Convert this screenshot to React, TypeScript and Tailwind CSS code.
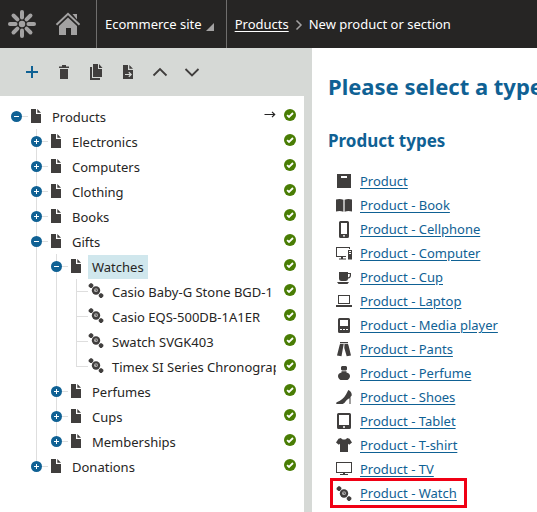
import { useState } from "react";
import type { ReactNode } from "react";

type Node = {
  name: string;
  icon?: "doc" | "watch";
  leaf?: boolean;
  selected?: boolean;
  arrow?: boolean;
  children?: Node[];
};

const tree: Node = {
  name: "Products",
  arrow: true,
  children: [
    { name: "Electronics" },
    { name: "Computers" },
    { name: "Clothing" },
    { name: "Books" },
    {
      name: "Gifts",
      children: [
        {
          name: "Watches",
          selected: true,
          children: [
            { name: "Casio Baby-G Stone BGD-1", icon: "watch", leaf: true },
            { name: "Casio EQS-500DB-1A1ER", icon: "watch", leaf: true },
            { name: "Swatch SVGK403", icon: "watch", leaf: true },
            { name: "Timex SI Series Chronograph", icon: "watch", leaf: true },
          ],
        },
        { name: "Perfumes" },
        { name: "Cups" },
        { name: "Memberships" },
      ],
    },
    { name: "Donations" },
  ],
};

function Icon({ children, className = "size-4" }: { children: ReactNode; className?: string }) {
  return (
    <svg viewBox="0 0 16 16" fill="currentColor" aria-hidden="true" className={`block shrink-0 overflow-visible ${className}`}>
      {children}
    </svg>
  );
}

const watchShape = (
  <>
    <path d="M2.400.2h1.400l1.600 1.600v1.400L3.800 5H2.400L.6 3.400V2zM12.300 10.200h1.400l1.700 1.600v1.400L13.700 15h-1.400l-1.600-1.800v-1.400z" />
    <circle cx="8" cy="7.500" r="4.200" />
    <circle cx="8" cy="7.200" r="1.900" fill="#b5b4b3" />
    <path d="M8 5.800v1.600l1.200.5" fill="none" stroke="#403e3d" strokeWidth=".8" />
  </>
);

const docShape = (
  <path d="M3 1h5v5h5v9H3zM9.3 1 13 4.7H9.3z" />
);

const productTypes: { name: string; shape: ReactNode; marked?: boolean }[] = [
  { name: "Product", shape: <path fillRule="evenodd" d="M1 0h14v14H1zM5 2v2h6V2z" /> },
  {
    name: "Product - Book",
    shape: <path d="M0 1.500c2.400-.8 5-.8 7.400.2v12c-2.400-1-5-1-7.400-.2zM8.600 1.700c2.400-1 5-1 7.400-.2v12c-2.400-.8-5-.8-7.400.2z" />,
  },
  {
    name: "Product - Cellphone",
    shape: <path fillRule="evenodd" d="M4.500-1h7A1.500 1.500 0 0 1 13 .5v14a1.500 1.500 0 0 1-1.500 1.500h-7A1.500 1.500 0 0 1 3 14.500V.5A1.500 1.500 0 0 1 4.500-1zM5 1v11h6V1zM7 13.200v1.300h2v-1.300z" />,
  },
  {
    name: "Product - Computer",
    shape: (
      <>
        <path fillRule="evenodd" d="M0 1h14v2h-1V2H1v8h9v1H7v1.500h3v1H3v-1h2V11H0z" />
        <path fillRule="evenodd" d="M12 4h4v9.500h-4zM13 5v1h2V5zM13 7v1h2V7z" />
      </>
    ),
  },
  {
    name: "Product - Cup",
    shape: (
      <>
        <path d="M3 2h9v6.500a2.500 2.500 0 0 1-2.500 2.500h-4A2.500 2.500 0 0 1 3 8.500zM1 12h12l-1.500 2h-9z" />
        <path d="M11 3.500h3.400v2c0 1.500-1.200 2.500-3 2.500" fill="none" stroke="currentColor" strokeWidth="1.200" />
      </>
    ),
  },
  {
    name: "Product - Laptop",
    shape: <path fillRule="evenodd" d="M2 1h12v9H2zM3 2v7h10V2zM0 11h16v2H0z" />,
  },
  {
    name: "Product - Media player",
    shape: (
      <>
        <path fillRule="evenodd" d="M3.500 0h9A1.500 1.500 0 0 1 14 1.500v12a1.500 1.500 0 0 1-1.500 1.500h-9A1.500 1.500 0 0 1 2 13.500v-12A1.500 1.500 0 0 1 3.500 0zM4 2v6h8V2z" />
        <path fill="#fff" d="M4 11h2v1H4zM7 11h2v1H7zM10 11h2v1h-2z" />
      </>
    ),
  },
  {
    name: "Product - Pants",
    shape: <path d="M4 0h8v1.200H4zM4 2h3.700L5.500 14.200 1 13.400 3.400 4zM8.500 2H12l.7 2L15 13.400l-4.300.8L8.300 6z" />,
  },
  {
    name: "Product - Perfume",
    shape: <path d="M6 0h4l1 1v2.500L10 4.500H6l-1-1V1zM5.500 5.300h5v1.300C12.600 7 14 8.400 14 10c0 1.700-1 3-2.500 4h-7C3 13 2 11.700 2 10c0-1.600 1.400-3 3.500-3.400z" />,
  },
  {
    name: "Product - Shoes",
    shape: <path d="M12.300 0C15 1.200 16 3.500 15.700 5.500L14.500 7v7h-1V8.200c-2.200.8-3.300 2.400-4.500 4-.8 1.200-1.900 1.800-3.500 1.800H.8c-1-.4-.8-1.700.4-2.100C5 10.500 8 8 10 4.500 10.800 3 11.600 1.500 12.300 0z" />,
  },
  {
    name: "Product - Tablet",
    shape: <path fillRule="evenodd" d="M2.500-1h11A1.500 1.500 0 0 1 15 .5v13a1.500 1.500 0 0 1-1.500 1.500h-11A1.500 1.500 0 0 1 1 13.500V.5A1.500 1.500 0 0 1 2.500-1zM3 1v10h10V1zM7 12.200v1.600h2v-1.600z" />,
  },
  {
    name: "Product - T-shirt",
    shape: <path d="M5 0c1 2 5 2 6 0l2.500.8L16 4.500 13.200 6.700 12 5.700V14H4V5.700l-1.200 1L0 4.500 2.500.8z" />,
  },
  {
    name: "Product - TV",
    shape: <path fillRule="evenodd" d="M0 0h16v11H9v1h3v1H4v-1h3v-1H0zM1 1v9h14V1z" />,
  },
  { name: "Product - Watch", shape: watchShape, marked: true },
];

function Check() {
  return (
    <svg viewBox="0 0 12 12" role="img" aria-label="Published" className="block size-3 shrink-0">
      <circle cx="6" cy="6" r="6" fill="#497d04" />
      <path d="m3.100 6.200 1.900 1.800 4-4" fill="none" stroke="#fff" strokeWidth="1.800" />
    </svg>
  );
}

function TreeItem({ node }: { node: Node }) {
  const [open, setOpen] = useState(Boolean(node.children));
  return (
    <li>
      <div className="flex h-[25px] items-center pr-2 pl-[11px]">
        {node.leaf ? (
          <span className="ml-[5px] h-px w-3 shrink-0 bg-[#dedede]" />
        ) : (
          <>
            <button
              type="button"
              aria-expanded={open}
              aria-label={`Toggle ${node.name}`}
              onClick={() => setOpen(!open)}
              className="relative z-10 shrink-0"
            >
              <svg viewBox="0 0 11 11" className="block size-[11px]">
                <circle cx="5.500" cy="5.500" r="5.500" fill="#0f6194" />
                <path d={open ? "M3 5.500h5" : "M3 5.500h5M5.500 3v5"} stroke="#fff" strokeWidth="1" />
              </svg>
            </button>
            <span className="h-px w-1.5 shrink-0 bg-[#dedede]" />
          </>
        )}
        <span className="flex w-5 shrink-0 pb-0.5 text-[#403e3d]">
          {node.icon === "watch" ? <Icon>{watchShape}</Icon> : <Icon>{docShape}</Icon>}
        </span>
        <span className="flex min-w-0 flex-1 overflow-hidden">
          <a
            href="#node"
            className={`h-6 px-1 leading-6 whitespace-nowrap text-[#262524] ${node.selected ? "bg-[#d0e7ed]" : ""}`}
          >
            {node.name}
          </a>
        </span>
        {node.arrow && (
          <svg viewBox="0 0 12 12" className="mb-1 block size-3 shrink-0" fill="none" stroke="#262524" strokeWidth="1.200" aria-hidden="true">
            <path d="M0.500 5.500h10M8 2.800l2.700 2.700L8 8.200" />
          </svg>
        )}
        <span className="ml-2 pb-1">
          <Check />
        </span>
      </div>
      {open && node.children && (
        <ul className="relative pl-5 before:absolute before:top-0 before:bottom-3 before:left-9 before:w-px before:bg-[#dedede]">
          {node.children.map((child) => (
            <TreeItem key={child.name} node={child} />
          ))}
        </ul>
      )}
    </li>
  );
}

function Tool({ label, children }: { label: string; children: ReactNode }) {
  return (
    <button type="button" aria-label={label} className="flex w-8 justify-center text-[#403e3d]">
      {children}
    </button>
  );
}

const petals = [0, 45, 90, 135, 180, 225, 270, 315];

export default function App() {
  return (
    <div className="flex min-h-screen flex-col overflow-hidden bg-white font-['Noto_Sans',sans-serif] text-[13px]">
      <header className="flex h-12 items-center bg-[#262524] whitespace-nowrap text-white">
        <a href="#home" aria-label="Kentico" className="ml-[7px] text-[#a3a2a2]">
          <svg viewBox="0 0 30 30" className="block size-[30px]">
            {petals.map((a) => (
              <path key={a} d="M15 8.500V3" transform={`rotate(${a} 15 15)`} stroke="currentColor" strokeWidth="4" strokeLinecap="round" />
            ))}
            <circle cx="15" cy="15" r="3.200" fill="currentColor" />
          </svg>
        </a>
        <a href="#dashboard" aria-label="Dashboard" className="ml-[18px] text-[#a3a2a2]">
          <svg viewBox="0 0 26 24" fill="currentColor" className="block h-6 w-[26px]">
            <path d="m13 5.500 9 8.500v9h-6v-7h-5v7H4v-9z" />
            <path d="m1.500 12.800 11.500-11 11.500 11" fill="none" stroke="currentColor" strokeWidth="2" />
            <path d="M17.500 2H22v5.500z" />
          </svg>
        </a>
        <button type="button" className="ml-[15px] flex h-12 items-center border-x border-[#6f6e6d] pt-0.5 pr-3 pl-2">
          Ecommerce site
          <svg viewBox="0 0 8 8" className="mt-1 ml-1 block size-2">
            <path d="M8 0v8H0z" fill="#a3a2a2" />
          </svg>
        </button>
        <nav aria-label="Breadcrumb" className="flex items-center pt-0.5 pl-2">
          <a href="#products" className="underline underline-offset-2">Products</a>
          <svg viewBox="0 0 8 12" className="mx-1.5 block h-3 w-2" fill="none" stroke="#a3a2a2" strokeWidth="1.500">
            <path d="m1.500 1.500 4.500 4.500-4.500 4.500" />
          </svg>
          <span>New product or section</span>
        </nav>
      </header>
      <div className="flex flex-1">
        <aside className="flex w-[312px] shrink-0 flex-col bg-[#d6d9d6] pr-2">
          <div className="flex h-12 items-center pl-4">
            <Tool label="New">
              <Icon>
                <path d="M8 2v12M2 8h12" fill="none" stroke="#0f6194" strokeWidth="2" />
              </Icon>
            </Tool>
            <Tool label="Delete">
              <Icon>
                <path d="M3 2.500h3V1h4v1.500h3V4H3zM4 5h8v10H4z" />
              </Icon>
            </Tool>
            <Tool label="Copy">
              <Icon>
                <path d="M5 0h5v5h4v8H5zM11 0l3.500 4H11zM2 3h2v11h8v2H2z" />
              </Icon>
            </Tool>
            <Tool label="Move">
              <Icon>
                <path d="M3 1h5v5h5v9H3zM9.300 1 13 4.700H9.300z" />
                <path d="M5 10.500h6M8.800 8.200l2.400 2.300-2.400 2.300" fill="none" stroke="#d6d9d6" strokeWidth="1.200" />
              </Icon>
            </Tool>
            <Tool label="Move up">
              <Icon>
                <path d="m1.500 11.500 6.500-6.500 6.500 6.500" fill="none" stroke="currentColor" strokeWidth="1.800" />
              </Icon>
            </Tool>
            <Tool label="Move down">
              <Icon>
                <path d="m1.500 5 6.500 6.500L14.500 5" fill="none" stroke="currentColor" strokeWidth="1.800" />
              </Icon>
            </Tool>
          </div>
          <ul className="flex-1 bg-white pt-2">
            <TreeItem node={tree} />
          </ul>
        </aside>
        <main className="min-w-0 flex-1 overflow-hidden pt-5 pl-4 text-[#0f6194]">
          <h1 className="text-[22px] leading-9 font-bold whitespace-nowrap">Please select a type</h1>
          <h2 className="mt-[25px] text-[17px] leading-6 font-bold">Product types</h2>
          <ul className="mt-[17px] pl-2">
            {productTypes.map((type) => (
              <li key={type.name} className="flex h-6 items-center">
                <a href="#type" className="relative flex items-center gap-2">
                  <span className="text-[#403e3d]">
                    <Icon>{type.shape}</Icon>
                  </span>
                  <span className="whitespace-nowrap underline underline-offset-2">{type.name}</span>
                  {type.marked && (
                    <span className="absolute -top-1.5 -right-2.5 -bottom-1 -left-1.5 border-3 border-[#f00014]" />
                  )}
                </a>
              </li>
            ))}
          </ul>
        </main>
      </div>
    </div>
  );
}
